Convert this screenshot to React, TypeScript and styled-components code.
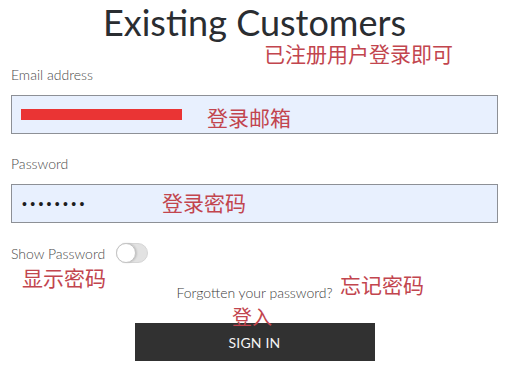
import styled, { createGlobalStyle } from "styled-components";

const GlobalStyle = createGlobalStyle`
  html, body {
    margin: 0;
    padding: 0;
    background: #ffffff;
  }
  body {
    font-family: Lato, "Liberation Sans", sans-serif;
  }
`;

const Page = styled.div`
  position: relative;
  width: 521px;
  height: 380px;
  overflow: hidden;
  padding: 0 23px 0 11px;
  box-sizing: border-box;
`;

const Form = styled.form`
  display: flex;
  flex-direction: column;
  width: 487px;
  margin: 0;
`;

const Title = styled.h1`
  margin: 2px 0 0;
  font-size: 36px;
  line-height: 40px;
  font-weight: 400;
  color: #2a2d31;
  text-align: center;
`;

const Label = styled.label<{ $gap: number }>`
  display: block;
  margin-top: ${(p) => p.$gap}px;
  font-size: 14px;
  line-height: 17px;
  font-weight: 300;
  color: #4a4a4a;
`;

const Field = styled.div`
  display: flex;
  align-items: center;
  height: 39px;
  margin-top: 12px;
  padding: 0 10px;
  box-sizing: border-box;
  background: #e8f0fe;
  border: 1px solid #8d9096;
`;

const Censor = styled.div`
  width: 161px;
  height: 11px;
  margin-left: -1px;
  background: #ea3434;
`;

const Dots = styled.span`
  font-family: "Liberation Sans", sans-serif;
  font-size: 14px;
  letter-spacing: 3.3px;
  color: #1d1d1d;
`;

const ToggleRow = styled.div`
  display: flex;
  align-items: center;
  gap: 11px;
  height: 20px;
  margin-top: 20px;
  font-size: 14px;
  line-height: 17px;
  font-weight: 300;
  color: #4a4a4a;
`;

const Switch = styled.span`
  position: relative;
  display: inline-block;
  width: 32px;
  height: 20px;
  box-sizing: border-box;
  border-radius: 10px;
  background: #e2e2e2;
  border: 1px solid #d6d6d6;

  &::before {
    content: "";
    position: absolute;
    left: -1px;
    top: -1px;
    width: 20px;
    height: 20px;
    box-sizing: border-box;
    border-radius: 50%;
    background: #ffffff;
    border: 1px solid #c4c4c4;
    box-shadow: 1px 0 2px rgba(0, 0, 0, 0.15);
  }
`;

const Forgot = styled.a`
  margin-top: 21px;
  align-self: center;
  font-size: 14px;
  line-height: 17px;
  font-weight: 300;
  color: #3c3c3c;
  text-decoration: none;
`;

const SignIn = styled.button`
  align-self: center;
  width: 240px;
  height: 38px;
  margin-top: 22px;
  border: none;
  background: #313131;
  color: #f4f4f4;
  font-family: Lato, "Liberation Sans", sans-serif;
  font-size: 14px;
  font-weight: 400;
  letter-spacing: 0.2px;
`;

const Note = styled.span<{ $x: number; $y: number; $size?: number }>`
  position: absolute;
  left: ${(p) => p.$x}px;
  top: ${(p) => p.$y}px;
  font-family: "Noto Sans CJK SC", sans-serif;
  font-size: ${(p) => p.$size ?? 21}px;
  line-height: 1;
  color: #c2454e;
  white-space: nowrap;
`;

const notes = [
  { text: "已注册用户登录即可", x: 264, y: 43 },
  { text: "登录邮箱", x: 207, y: 107 },
  { text: "登录密码", x: 162, y: 192 },
  { text: "显示密码", x: 22, y: 267 },
  { text: "忘记密码", x: 340, y: 274 },
  { text: "登入", x: 232, y: 307, size: 20 },
];

export default function App() {
  return (
    <>
      <GlobalStyle />
      <Page>
        <Form onSubmit={(e) => e.preventDefault()}>
          <Title>Existing Customers</Title>
          <Label $gap={24}>Email address</Label>
          <Field>
            <Censor />
          </Field>
          <Label $gap={21}>Password</Label>
          <Field>
            <Dots>••••••••</Dots>
          </Field>
          <ToggleRow>
            Show Password
            <Switch />
          </ToggleRow>
          <Forgot href="#">Forgotten your password?</Forgot>
          <SignIn type="submit">SIGN IN</SignIn>
        </Form>
        {notes.map((n) => (
          <Note key={n.text} $x={n.x} $y={n.y} $size={n.size}>
            {n.text}
          </Note>
        ))}
      </Page>
    </>
  );
}
